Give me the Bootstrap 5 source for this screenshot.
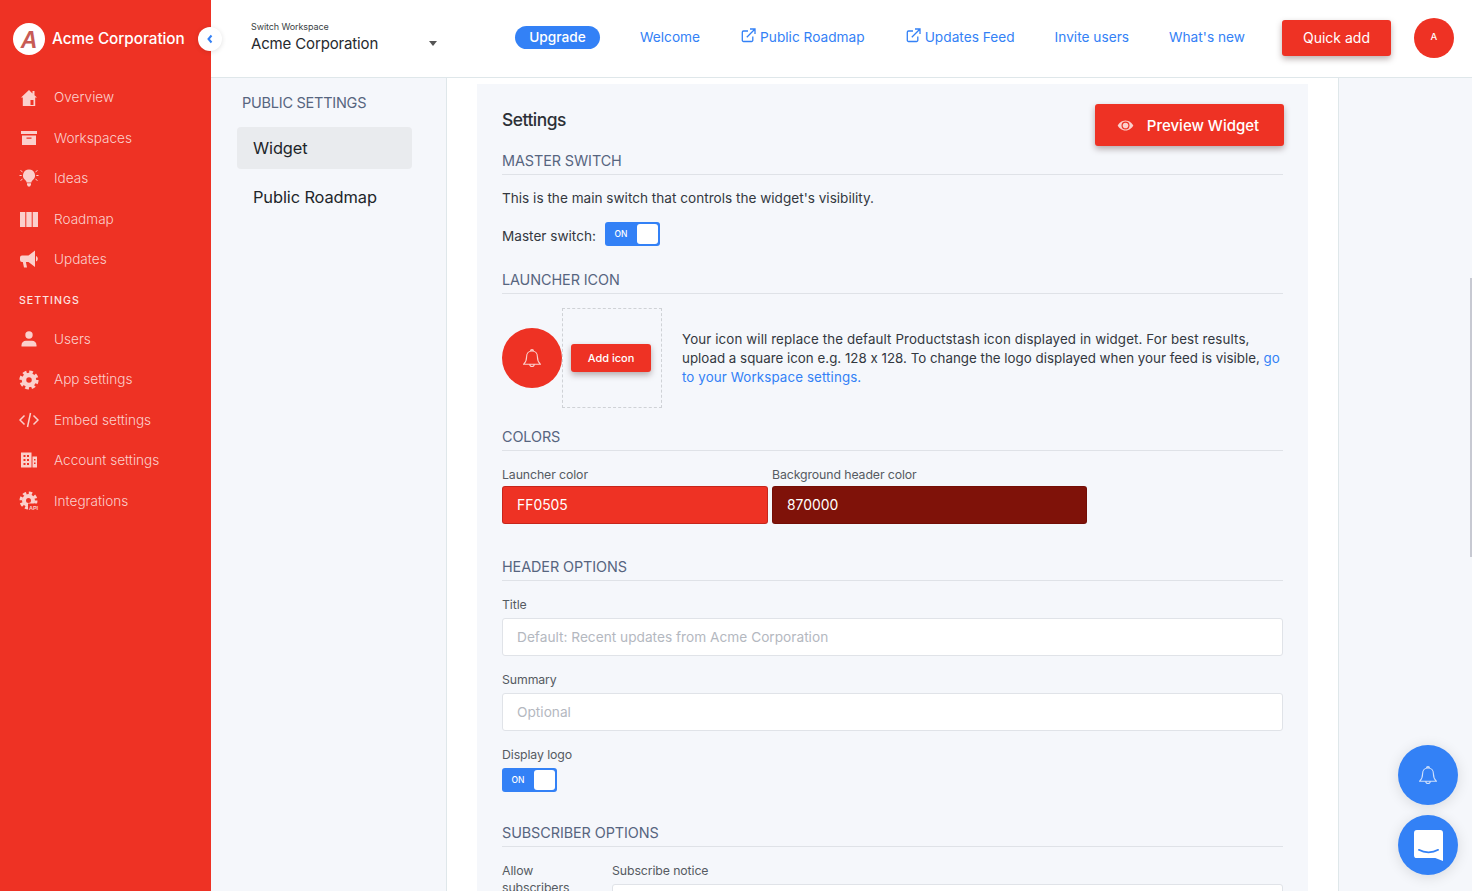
<!DOCTYPE html>
<html lang="en">
<head>
<meta charset="utf-8">
<title>Widget settings</title>
<link href="https://cdn.jsdelivr.net/npm/bootstrap@5.3.0/dist/css/bootstrap.min.css" rel="stylesheet">
<style>
:root{--acme-red:#ee3224;--acme-blue:#3381f6;--acme-pale:#f5f7fb;--acme-line:#dfe7ea;--acme-pink:#fbd0cc;}
html,body{height:891px;overflow:hidden;}
body{font-family:"Inter","Liberation Sans",sans-serif;font-size:13.5px;color:#33383f;background:var(--acme-pale);font-feature-settings:"calt" 0;}
.shell{height:891px;overflow:hidden;}
.side{width:211px;background:var(--acme-red);position:relative;flex:none;}
.brand{height:77.35px;padding-left:13px;gap:7px;color:#fff;font-size:15.3px;font-weight:500;letter-spacing:-.05px;white-space:nowrap;}
.brand span{margin-top:1px;}
.brand svg{width:32px;height:32px;}
.collapser{position:absolute;left:198px;top:27px;width:24px;height:24px;border-radius:50%;background:#fff;box-shadow:0 1px 5px rgba(0,0,0,.12);z-index:3;}
.side-item{height:40.4px;padding-left:19px;color:var(--acme-pink);font-size:13.6px;font-weight:300;text-decoration:none;}
.side-item svg{width:20px;height:20px;margin-right:15px;flex:none;fill:var(--acme-pink);}
.side-head{height:39.7px;padding-left:19px;padding-top:3px;color:#fde3e0;font-size:10.6px;font-weight:500;letter-spacing:1px;}
.right-col{min-width:0;height:891px;}
.topbar{height:78px;flex:none;background:#fff;border-bottom:1px solid var(--acme-line);padding-left:40px;padding-bottom:2px;}
.switcher{width:192px;padding-right:0;}
.switch-small{font-size:9px;line-height:11px;color:#3a3f45;margin-top:-3px;margin-bottom:1px;letter-spacing:-.1px;}
.switch-name{font-size:15px;line-height:22px;color:#26292e;letter-spacing:-.15px;}
.caret-mark{width:0;height:0;border-left:4.5px solid transparent;border-right:4.5px solid transparent;border-top:5px solid #555;margin-top:12px;margin-right:6px;}
.top-links{margin-left:72px;gap:40px;font-size:13.7px;}
.top-links a{color:var(--acme-blue);text-decoration:none;white-space:nowrap;font-weight:400;}
.top-links svg{width:15px;height:15px;margin-left:1px;margin-right:4px;vertical-align:-1px;}
.upgrade-pill{background:var(--acme-blue);color:#fff!important;border-radius:12px;width:85px;height:23px;line-height:23px;text-align:center;font-weight:500!important;}
.red-btn{background:var(--acme-red);color:#fff;border:0;border-radius:3px;box-shadow:0 3px 6px rgba(60,30,30,.35);}
.red-btn:hover{background:var(--acme-red);color:#fff;}
.quick-btn{width:109px;height:36px;font-size:14px;padding:0;margin-left:37px;flex:none;}
.avatar-dot{width:40px;height:40px;border-radius:50%;background:var(--acme-red);color:#fff;font-size:9.5px;font-weight:500;margin-left:23px;flex:none;}
.workarea{flex:1 1 0;min-height:0;overflow:hidden;}
.sub-nav{width:236px;flex:none;background:var(--acme-pale);border-right:1px solid var(--acme-line);padding:14px 34px 0 26px;}
.sub-title{font-size:14.5px;line-height:22px;color:#57657f;margin:0 0 13px 5px;letter-spacing:-.25px;}
.sub-link{display:block;height:42px;line-height:42px;padding-left:16px;color:#212529;font-size:16.4px;border-radius:4px;text-decoration:none;letter-spacing:-.1px;}
.sub-link.on{background:#e9ebee;}
.sub-link+.sub-link{margin-top:7px;}
.mid{width:892px;flex:none;background:#fff;border-right:1px solid var(--acme-line);padding:6px 30px 0;overflow:hidden;}
.panel{background:var(--acme-pale);padding:20px 25px 0 25px;min-height:100%;}
.panel-title{font-size:17.4px;font-weight:500;color:#2c3036;letter-spacing:-.5px;line-height:32px;margin:-10px 0 0 0;}
.preview-btn{width:189px;height:42px;font-size:15px;font-weight:500;padding:2px 3px 0 0;margin-right:-1px;}
.preview-btn svg{width:17px;height:17px;margin-right:13px;margin-top:-1px;}
.sec-head{height:25px;line-height:21px;border-bottom:1px solid #dfe2e7;font-size:14.4px;color:#57657f;letter-spacing:-.08px;}
.txt{line-height:19px;font-size:13.6px;}
.txt-long{line-height:19px;font-size:13.35px;white-space:nowrap;}
.spread-line{letter-spacing:.11px;}
.toggle-on{width:55px;height:24px;background:var(--acme-blue);border-radius:3px;padding:2px;color:#fff;font-size:8.5px;font-weight:500;flex:none;}
.toggle-on i{font-style:normal;flex:1;text-align:center;padding-right:2px;}
.toggle-on b{width:21px;height:20px;background:#fff;border-radius:3px;display:block;}
.bell-round{width:60px;height:60px;border-radius:50%;background:var(--acme-red);flex:none;}
.drop-box{width:100px;height:100px;border:1px dashed #cfd2d6;flex:none;padding-right:2px;}
.add-btn{width:80px;height:28px;font-size:11px;font-weight:500;padding:0;}
.lab{font-size:12.3px;line-height:19px;color:#555b62;letter-spacing:-.1px;}
.color-in{height:38px;color:#fff;font-size:13.9px;padding:0 14px;border-radius:3px;border:1px solid rgba(80,0,0,.25);}
.plain-in.form-control{height:38px;font-size:13.7px;padding:0 14px;border:1px solid #e0e3e8;border-radius:3px;background:#fff;}
.plain-in.form-control::placeholder{color:#b4b8bf;}
.float-btn{position:fixed;left:1398px;width:60px;height:60px;border-radius:50%;background:var(--acme-blue);box-shadow:0 2px 14px rgba(0,0,0,.12);z-index:5;}
.bar-thumb{position:fixed;left:1470px;top:278px;width:2px;height:279px;background:#c7c9d2;}
a.inline-blue{color:var(--acme-blue);text-decoration:none;}
</style>
</head>
<body>
<div class="shell d-flex">
  <aside class="side d-flex flex-column">
    <div class="brand d-flex align-items-center">
      <svg viewBox="0 0 32 32"><circle cx="16" cy="16" r="16" fill="#fff"/><text x="16" y="24.5" text-anchor="middle" font-family="Liberation Sans, sans-serif" font-size="23" font-weight="700" font-style="italic" fill="#c75b55">A</text></svg>
      <span>Acme Corporation</span>
    </div>
    <div class="collapser d-flex align-items-center justify-content-center"><svg width="8" height="10" viewBox="0 0 8 10"><path d="M5.500 1.500 2.500 5l3 3.500" fill="none" stroke="#3381f6" stroke-width="2"/></svg></div>
    <nav class="d-flex flex-column">
      <a class="side-item d-flex align-items-center" href="#"><svg viewBox="0 0 20 20"><path d="M10 2 2 9.500h1.800V18h12.400V9.500H18L15.500 7.200V3h-2v2.400zM11.500 12h3v5h-3z" fill-rule="evenodd"/></svg>Overview</a>
      <a class="side-item d-flex align-items-center" href="#"><svg viewBox="0 0 20 20"><path d="M2 3h16v3H2zM3 7.500h14V17H3zM7.500 9.500v1.300h5V9.500z" fill-rule="evenodd"/></svg>Workspaces</a>
      <a class="side-item d-flex align-items-center" href="#"><svg viewBox="0 0 20 20"><path d="M10 1.500a6 6 0 0 0-3.600 10.800c.8.700 1.100 1.500 1.200 2.200h4.800c.1-.7.400-1.500 1.200-2.200A6 6 0 0 0 10 1.500zM8 15.300h4v1.500l-1 1.700H9l-1-1.700z"/><path d="M.5 7.500h2.200M17.300 7.500h2.200M1.500 2.500l2 1.300M18.500 2.500l-2 1.300M1.500 12.500l2-1.300M18.500 12.500l-2-1.300" stroke="#fbd0cc" stroke-width="1" fill="none"/></svg>Ideas</a>
      <a class="side-item d-flex align-items-center" href="#"><svg viewBox="0 0 20 20"><path d="M1 3h5.300v15H1zM7.300 3h5.400v15H7.300zM13.700 3H19v15h-5.300z"/></svg>Roadmap</a>
      <a class="side-item d-flex align-items-center" href="#"><svg viewBox="0 0 20 20"><path d="M16 1.500 9.500 6.500H3a2 2 0 0 0-2 2v2.500a2 2 0 0 0 2 2h.8l1.200 5.500h3L6.900 13h2.600l6.500 5zM17 7c1.300.6 1.800 1.600 1.800 2.800s-.5 2.200-1.800 2.800z"/></svg>Updates</a>
      <div class="side-head d-flex align-items-center">SETTINGS</div>
      <a class="side-item d-flex align-items-center" href="#"><svg viewBox="0 0 20 20"><circle cx="10" cy="6" r="3.700"/><path d="M2.500 17.500v-1.300c0-2.700 2-4.400 4.500-4.400h6c2.500 0 4.500 1.700 4.500 4.400v1.300z"/></svg>Users</a>
      <a class="side-item d-flex align-items-center" href="#"><svg viewBox="0 0 20 20"><circle cx="10" cy="10" r="5" fill="none" stroke="#fbd0cc" stroke-width="4.500"/><circle cx="10" cy="10" r="7.900" fill="none" stroke="#fbd0cc" stroke-width="3.400" stroke-dasharray="3.600 2.600"/></svg>App settings</a>
      <a class="side-item d-flex align-items-center" href="#"><svg viewBox="0 0 20 20"><path d="M5.500 5.500 1 10l4.500 4.500M14.500 5.500 19 10l-4.500 4.500M11.500 3 8.500 17" fill="none" stroke="#fbd0cc" stroke-width="1.500"/></svg>Embed settings</a>
      <a class="side-item d-flex align-items-center" href="#"><svg viewBox="0 0 20 20"><path d="M2 2.500h10.500v15H2zM13.500 6.500H18v11h-4.500zM4.500 5v2h2V5zM8 5v2h2V5zM4.500 9v2h2V9zM8 9v2h2V9zM4.500 13v2h2v-2zM8 13v2h2v-2zM15 9v1.500h1.500V9zM15 12.500V14h1.500v-1.500z" fill-rule="evenodd"/></svg>Account settings</a>
      <a class="side-item d-flex align-items-center" href="#"><svg viewBox="0 0 20 20"><circle cx="9.500" cy="9.500" r="4.500" fill="none" stroke="#fbd0cc" stroke-width="4"/><circle cx="9.500" cy="9.500" r="7.500" fill="none" stroke="#fbd0cc" stroke-width="3" stroke-dasharray="3.400 2.500"/><rect x="9" y="12.500" width="11" height="7" fill="#ee3224"/><text x="14.500" y="18.500" text-anchor="middle" font-size="5.500" font-weight="700" font-family="Liberation Sans, sans-serif" fill="#fbd0cc">API</text></svg>Integrations</a>
    </nav>
  </aside>
  <div class="right-col flex-grow-1 d-flex flex-column">
    <header class="topbar d-flex align-items-center">
      <div class="switcher d-flex justify-content-between align-items-center">
        <div class="pt-1"><div class="switch-small">Switch Workspace</div><div class="switch-name">Acme Corporation</div></div>
        <span class="caret-mark"></span>
      </div>
      <div class="top-links d-flex align-items-center">
        <a class="upgrade-pill" href="#">Upgrade</a>
        <a href="#">Welcome</a>
        <a href="#"><svg viewBox="0 0 15 15" fill="none" stroke="#3381f6" stroke-width="1.300"><path d="M7 3H2.500A1.200 1.200 0 0 0 1.300 4.200v8.100a1.200 1.200 0 0 0 1.200 1.200h8.100a1.200 1.200 0 0 0 1.200-1.200V8.500M5.800 9.200 13.500 1.500M9 1h5v5"/></svg>Public Roadmap</a>
        <a href="#"><svg viewBox="0 0 15 15" fill="none" stroke="#3381f6" stroke-width="1.300"><path d="M7 3H2.500A1.200 1.200 0 0 0 1.300 4.200v8.100a1.200 1.200 0 0 0 1.200 1.200h8.100a1.200 1.200 0 0 0 1.200-1.200V8.500M5.800 9.200 13.500 1.500M9 1h5v5"/></svg>Updates Feed</a>
        <a href="#">Invite users</a>
        <a href="#">What's new</a>
      </div>
      <button class="btn red-btn quick-btn" type="button">Quick add</button>
      <div class="avatar-dot d-flex align-items-center justify-content-center">A</div>
    </header>
    <div class="workarea d-flex">
      <div class="sub-nav">
        <div class="sub-title">PUBLIC SETTINGS</div>
        <a class="sub-link on" href="#">Widget</a>
        <a class="sub-link" href="#">Public Roadmap</a>
      </div>
      <main class="mid">
        <div class="panel">
          <div class="d-flex justify-content-between align-items-center">
            <h1 class="panel-title">Settings</h1>
            <button class="btn red-btn preview-btn d-flex align-items-center justify-content-center" type="button"><svg viewBox="0 0 20 20"><path d="M10 4C5.500 4 2 7.500 .8 10c1.200 2.500 4.700 6 9.200 6s8-3.500 9.200-6C18 7.500 14.500 4 10 4z" fill="#fbd0cc"/><circle cx="10" cy="10" r="4.700" fill="#ee3224"/><circle cx="10" cy="10" r="3.300" fill="#fbd0cc"/></svg>Preview Widget</button>
          </div>
          <div class="sec-head" style="margin-top:4px">MASTER SWITCH</div>
          <p class="txt mb-0" style="margin-top:14px">This is the main switch that controls the widget's visibility.</p>
          <div class="d-flex align-items-center" style="margin-top:14px;gap:9px"><span class="txt pt-1">Master switch:</span><div class="toggle-on d-flex align-items-center"><i>ON</i><b></b></div></div>
          <div class="sec-head" style="margin-top:23px">LAUNCHER ICON</div>
          <div class="d-flex align-items-center" style="margin-top:14px">
            <div class="bell-round d-flex align-items-center justify-content-center"><svg width="18" height="20" viewBox="2 .5 16 17" fill="none" stroke="#fbd0cc" stroke-width="1"><path d="M10 2.800c-3 0-4.800 2.200-4.800 5 0 3.400-.8 5-2.600 6.700h14.800c-1.800-1.700-2.600-3.300-2.600-6.700 0-2.800-1.800-5-4.800-5zM8.700 2.800a1.300 1.300 0 0 1 2.600 0M8 14.500a2 2 0 0 0 4 0"/></svg></div>
            <div class="drop-box d-flex align-items-center justify-content-center"><button class="btn red-btn add-btn" type="button">Add icon</button></div>
            <p class="txt-long mb-0 flex-grow-1" style="margin-left:20px"><span class="spread-line">Your icon will replace the default Productstash icon displayed in widget. For best results,</span><br>upload a square icon e.g. 128 x 128. To change the logo displayed when your feed is visible, <a class="inline-blue" href="#">go<br><span class="spread-line">to your Workspace settings.</span></a></p>
          </div>
          <div class="sec-head" style="margin-top:18px">COLORS</div>
          <div class="d-flex" style="margin-top:14px;gap:4px">
            <div style="width:266px"><div class="lab" style="margin-bottom:2px">Launcher color</div><div class="color-in d-flex align-items-center" style="background:#ee3224">FF0505</div></div>
            <div style="width:315px"><div class="lab" style="margin-bottom:2px">Background header color</div><div class="color-in d-flex align-items-center" style="background:#7f1209">870000</div></div>
          </div>
          <div class="sec-head" style="margin-top:32px">HEADER OPTIONS</div>
          <div class="lab" style="margin-top:14px;margin-bottom:4px">Title</div>
          <input class="form-control plain-in" type="text" placeholder="Default: Recent updates from Acme Corporation">
          <div class="lab" style="margin-top:14px;margin-bottom:4px">Summary</div>
          <input class="form-control plain-in" type="text" placeholder="Optional">
          <div class="lab" style="margin-top:14px;margin-bottom:4px">Display logo</div>
          <div class="toggle-on d-flex align-items-center"><i>ON</i><b></b></div>
          <div class="sec-head" style="margin-top:30px">SUBSCRIBER OPTIONS</div>
          <div class="d-flex" style="margin-top:14px">
            <div class="lab" style="width:110px;line-height:17px;padding-top:1px">Allow<br>subscribers</div>
            <div class="flex-grow-1"><div class="lab" style="margin-bottom:4px">Subscribe notice</div><input class="form-control plain-in" type="text"></div>
          </div>
        </div>
      </main>
    </div>
  </div>
</div>
<div class="float-btn d-flex align-items-center justify-content-center" style="top:745px"><svg width="18" height="20" viewBox="2 .5 16 17" fill="none" stroke="#cfe0fb" stroke-width="1"><path d="M10 2.800c-3 0-4.800 2.200-4.800 5 0 3.400-.8 5-2.600 6.700h14.800c-1.800-1.700-2.600-3.300-2.600-6.700 0-2.800-1.800-5-4.800-5zM8.700 2.800a1.300 1.300 0 0 1 2.600 0M8 14.500a2 2 0 0 0 4 0"/></svg></div>
<div class="float-btn d-flex align-items-center justify-content-center" style="top:815px"><svg width="29" height="31" viewBox="0 0 30 32"><path d="M3 0h24a3 3 0 0 1 3 3v29l-8-3H3a3 3 0 0 1-3-3V3a3 3 0 0 1 3-3z" fill="#fff"/><path d="M5 20.500c6 3.500 14 3.500 20 0" fill="none" stroke="#3381f6" stroke-width="1.800" stroke-linecap="round"/></svg></div>
<div class="bar-thumb"></div>
</body>
</html>
